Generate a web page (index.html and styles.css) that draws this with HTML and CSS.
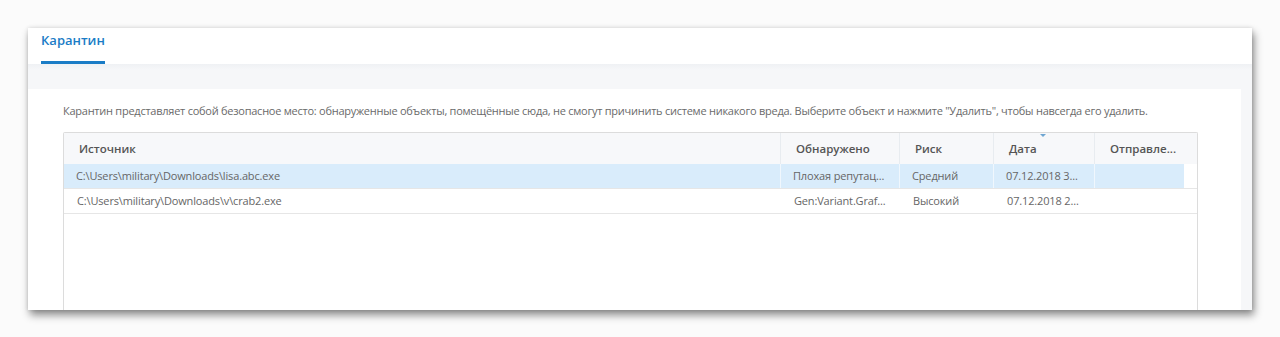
FILE: index.html
```html
<!DOCTYPE html>
<html>
  <head>
    <meta charset="utf-8">
    <title>Карантин</title>
    <link rel="stylesheet" href="styles.css">
  </head>
  <body>
    <div class="window">
      <div class="tabs">
        <a class="tab tab--active">Карантин</a>
      </div>
      <div class="band"></div>
      <div class="content">
        <div class="main">
          <p class="intro">Карантин представляет собой безопасное место: обнаруженные объекты, помещённые сюда, не смогут причинить системе никакого вреда. Выберите объект и нажмите "Удалить", чтобы навсегда его удалить.</p>
          <div class="table">
            <div class="row row--head">
              <div class="cell">Источник</div>
              <div class="cell">Обнаружено</div>
              <div class="cell">Риск</div>
              <div class="cell cell--sorted">Дата</div>
              <div class="cell">Отправле...</div>
              <div class="cell"></div>
            </div>
            <div class="row row--selected">
              <div class="cell">C:\Users\military\Downloads\lisa.abc.exe</div>
              <div class="cell">Плохая репутац...</div>
              <div class="cell">Средний</div>
              <div class="cell">07.12.2018 3...</div>
              <div class="cell"></div>
              <div class="cell"></div>
            </div>
            <div class="row">
              <div class="cell">C:\Users\military\Downloads\v\crab2.exe</div>
              <div class="cell">Gen:Variant.Graf...</div>
              <div class="cell">Высокий</div>
              <div class="cell">07.12.2018 2...</div>
              <div class="cell"></div>
              <div class="cell"></div>
            </div>
          </div>
        </div>
        <div class="strip"></div>
      </div>
    </div>
  </body>
</html>
```

FILE: styles.css
```css
body {
  margin: 0;
  padding: 28px;
  background: #fbfbfb;
  font-family: 'Open Sans', 'Noto Sans', sans-serif;
  color: #666;
}
.window {
  width: 1224px;
  height: 282px;
  background: #fff;
  overflow: hidden;
  box-shadow: 2px 5px 8px rgba(0, 0, 0, 0.45), 0 0 4px rgba(0, 0, 0, 0.12);
  display: flex;
  flex-direction: column;
}
.tabs {
  height: 36px;
  padding-left: 13px;
  display: flex;
}
.tab {
  font-size: 13px;
  font-weight: 600;
  color: #1a7cc6;
  line-height: 24px;
  height: 33px;
  border-bottom: 3px solid #1a7cc6;
}
.band {
  height: 25px;
  background: linear-gradient(#eff1f4, #f6f7f9 6px, #f6f7f9);
}
.content {
  flex: 1;
  display: flex;
  min-height: 0;
}
.main {
  flex: 1;
  min-width: 0;
  background: #fff;
  padding: 0 43px 0 35px;
  display: flex;
  flex-direction: column;
}
.strip {
  width: 11px;
  background: #f6f7f9;
}
.intro {
  margin: 14px 0 0;
  height: 29px;
  font-size: 11px;
  letter-spacing: -0.25px;
  line-height: 16px;
  color: #6a6a6a;
  white-space: nowrap;
}
.table {
  flex: 1;
  border: 1px solid #dcdcdc;
  border-bottom: none;
  border-radius: 2px 2px 0 0;
}
.row {
  display: grid;
  grid-template-columns: 717px 119px 94px 101px 89px 1fr;
  height: 24px;
  border-bottom: 1px solid #e6e6e6;
  font-size: 11px;
  letter-spacing: -0.15px;
  line-height: 24px;
  color: #666;
}
.row--head {
  height: 31px;
  line-height: 31px;
  border-bottom: none;
  background: #f7f8fa;
  font-size: 11.5px;
  letter-spacing: 0;
  font-weight: 600;
  color: #555;
}
.row .cell {
  padding-left: 13px;
  border-right: 1px solid transparent;
  overflow: hidden;
  white-space: nowrap;
}
.row--head .cell {
  padding-left: 15px;
  position: relative;
  border-right-color: #e8ecf0;
}
.row--selected .cell {
  background: #d9ecfb;
  border-right-color: #f0f7fd;
  padding-left: 12px;
}
.row .cell:nth-child(5),
.row .cell:last-child {
  border-right: none;
}
.row--selected .cell:last-child {
  background: none;
}
.cell--sorted::before {
  content: '';
  position: absolute;
  top: 1px;
  left: 46px;
  border-left: 3px solid transparent;
  border-right: 3px solid transparent;
  border-top: 3px solid #6fa6d2;
}
```
